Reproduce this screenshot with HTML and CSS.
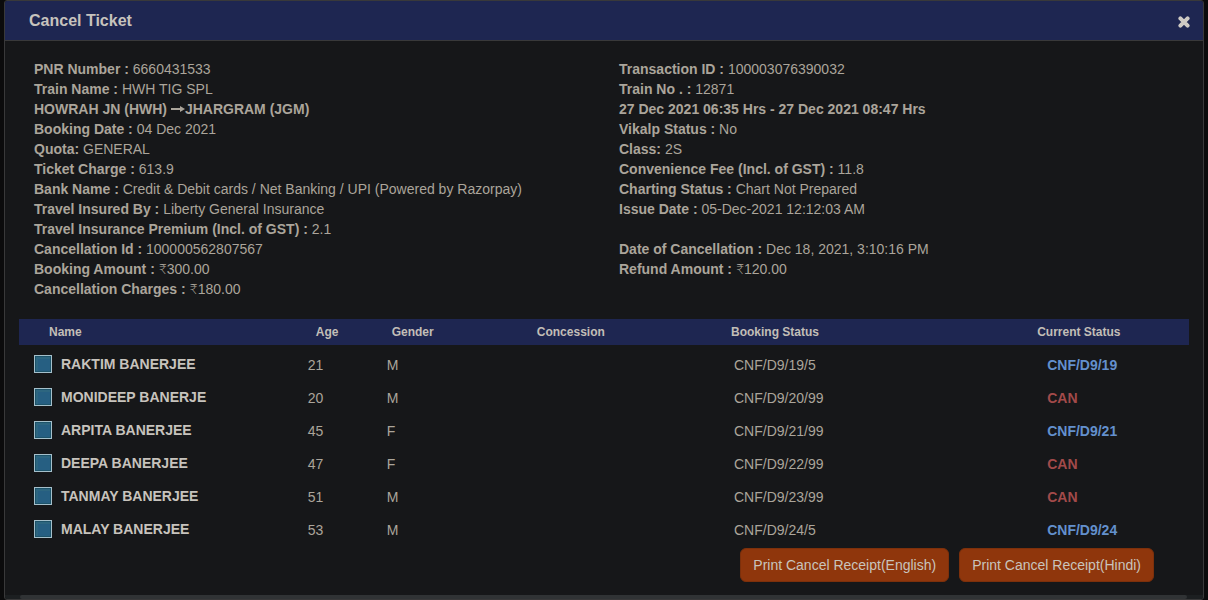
FILE: index.html
```html
<!DOCTYPE html>
<html lang="en">
<head>
<meta charset="utf-8">
<meta name="viewport" content="width=device-width, initial-scale=1">
<title>Cancel Ticket</title>
<link rel="stylesheet" href="styles.css">
</head>
<body>
<main class="dialog" role="dialog" aria-labelledby="dialog-title">
  <header class="dialog-header">
    <h1 class="dialog-title" id="dialog-title">Cancel Ticket</h1>
    <button class="close" type="button" aria-label="Close">
      <svg class="close-icon" viewBox="0 0 12 12" aria-hidden="true"><path d="M2.4 2.4 9.6 9.6M9.6 2.4 2.4 9.6"/></svg>
    </button>
  </header>
  <div class="dialog-body">
    <section class="details">
      <div class="detail-column">
        <p><b>PNR Number :</b> 6660431533</p>
        <p><b>Train Name :</b> HWH TIG SPL</p>
        <p><b>HOWRAH JN (HWH) <svg class="arrow" viewBox="0 0 14 10" role="img" aria-label="to"><path class="arrow-shaft" d="M0 5h11"/><path class="arrow-head" d="M9 2l5 3-5 3z"/></svg>JHARGRAM (JGM)</b></p>
        <p><b>Booking Date :</b> 04 Dec 2021</p>
        <p><b>Quota:</b> GENERAL</p>
        <p><b>Ticket Charge :</b> 613.9</p>
        <p><b>Bank Name :</b> Credit &amp; Debit cards / Net Banking / UPI (Powered by Razorpay)</p>
        <p><b>Travel Insured By :</b> Liberty General Insurance</p>
        <p><b>Travel Insurance Premium (Incl. of GST) :</b> 2.1</p>
        <p><b>Cancellation Id :</b> 100000562807567</p>
        <p><b>Booking Amount :</b> <span class="rupee">₹</span>300.00</p>
        <p><b>Cancellation Charges :</b> <span class="rupee">₹</span>180.00</p>
      </div>
      <div class="detail-column">
        <p><b>Transaction ID :</b> 100003076390032</p>
        <p><b>Train No . :</b> 12871</p>
        <p><b>27 Dec 2021 06:35 Hrs - 27 Dec 2021 08:47 Hrs</b></p>
        <p><b>Vikalp Status :</b> No</p>
        <p><b>Class:</b> 2S</p>
        <p><b>Convenience Fee (Incl. of GST) :</b> 11.8</p>
        <p><b>Charting Status :</b> Chart Not Prepared</p>
        <p><b>Issue Date :</b> 05-Dec-2021 12:12:03 AM</p>
        <p></p>
        <p><b>Date of Cancellation :</b> Dec 18, 2021, 3:10:16 PM</p>
        <p><b>Refund Amount :</b> <span class="rupee">₹</span>120.00</p>
      </div>
    </section>
    <table class="passengers">
      <thead>
        <tr>
          <th class="name" scope="col">Name</th>
          <th class="age" scope="col">Age</th>
          <th class="gender" scope="col">Gender</th>
          <th class="concession" scope="col">Concession</th>
          <th class="booking" scope="col">Booking Status</th>
          <th class="current" scope="col">Current Status</th>
        </tr>
      </thead>
      <tbody>
        <tr><td class="name"><label class="passenger"><input class="check" type="checkbox" checked>RAKTIM BANERJEE</label></td><td class="age">21</td><td class="gender">M</td><td class="concession"></td><td class="booking">CNF/D9/19/5</td><td class="current confirmed">CNF/D9/19</td></tr>
        <tr><td class="name"><label class="passenger"><input class="check" type="checkbox" checked>MONIDEEP BANERJE</label></td><td class="age">20</td><td class="gender">M</td><td class="concession"></td><td class="booking">CNF/D9/20/99</td><td class="current cancelled">CAN</td></tr>
        <tr><td class="name"><label class="passenger"><input class="check" type="checkbox" checked>ARPITA BANERJEE</label></td><td class="age">45</td><td class="gender">F</td><td class="concession"></td><td class="booking">CNF/D9/21/99</td><td class="current confirmed">CNF/D9/21</td></tr>
        <tr><td class="name"><label class="passenger"><input class="check" type="checkbox" checked>DEEPA BANERJEE</label></td><td class="age">47</td><td class="gender">F</td><td class="concession"></td><td class="booking">CNF/D9/22/99</td><td class="current cancelled">CAN</td></tr>
        <tr><td class="name"><label class="passenger"><input class="check" type="checkbox" checked>TANMAY BANERJEE</label></td><td class="age">51</td><td class="gender">M</td><td class="concession"></td><td class="booking">CNF/D9/23/99</td><td class="current cancelled">CAN</td></tr>
        <tr><td class="name"><label class="passenger"><input class="check" type="checkbox" checked>MALAY BANERJEE</label></td><td class="age">53</td><td class="gender">M</td><td class="concession"></td><td class="booking">CNF/D9/24/5</td><td class="current confirmed">CNF/D9/24</td></tr>
      </tbody>
    </table>
    <div class="actions">
      <button class="print" type="button">Print Cancel Receipt(English)</button>
      <button class="print" type="button">Print Cancel Receipt(Hindi)</button>
    </div>
  </div>
  <div class="scroll-track"><div class="scroll-thumb"></div></div>
</main>
</body>
</html>
```
FILE: styles.css
```css
* {
  box-sizing: border-box;
}

body {
  margin: 0;
  padding: 0 4px;
  background: #0b0b0c;
  color: #aba59b;
  font: 14px/20px "Liberation Sans", Arial, sans-serif;
}

p {
  margin: 0;
  min-height: 20px;
}

.dialog {
  display: flex;
  flex-direction: column;
  min-height: 100vh;
  background: #161719;
  border: 1px solid #39393a;
  border-radius: 3px;
  overflow: hidden;
}

.dialog-header {
  display: flex;
  align-items: center;
  justify-content: space-between;
  height: 40px;
  padding: 0 13px 0 24px;
  background: #1e2651;
  border-bottom: 1px solid #39393a;
}

.dialog-title {
  margin: 0;
  color: #c7c3bd;
  font-size: 16px;
  line-height: 20px;
}

.close {
  display: flex;
  padding: 2px 0 0;
  border: 0;
  background: none;
}

.close-icon {
  width: 12px;
  height: 12px;
  fill: none;
  stroke: #cecac4;
  stroke-width: 4;
  stroke-linecap: round;
}

.dialog-body {
  flex: 1;
  padding: 18px 14px 12px;
}

.details {
  display: grid;
  grid-template-columns: 1fr 1fr;
  margin-bottom: 20px;
}

.detail-column {
  padding: 0 15px;
}

.arrow {
  width: 14px;
  height: 10px;
}

.arrow-shaft {
  stroke: currentColor;
  stroke-width: 2;
}

.arrow-head {
  fill: currentColor;
}

.rupee {
  font-family: Lato, sans-serif;
  font-weight: 300;
  line-height: 1;
}

.passengers {
  width: 100%;
  table-layout: fixed;
  border-collapse: collapse;
  text-align: left;
}

.passengers th,
.passengers td {
  padding: 0 0 0 8px;
}

.passengers th {
  height: 26px;
  background: #1e2651;
  color: #c2beb7;
  font-size: 12px;
  line-height: 14px;
}

.passengers td {
  height: 33px;
}

.passengers tbody::before {
  content: "";
  display: block;
  height: 3px;
}

.name { width: 24%; }
.age { width: 7%; }
.gender { width: 13%; }
.concession { width: 16%; }
.booking { width: 26%; }
.current { width: 14%; }

.passengers th.name { padding-left: 30px; }
.passengers td.name { padding: 0 0 2px 15px; }
.passengers th.age { padding-left: 16px; }
.passengers th.gender { padding-left: 10px; }
.passengers td.gender { padding-left: 5px; }
.passengers th.concession { padding-left: 3px; }
.passengers th.booking { padding-left: 10px; }
.passengers td.booking { padding-left: 13px; }
.passengers th.current { padding-left: 12px; }
.passengers td.current { padding-left: 22px; }

.passenger {
  display: flex;
  align-items: center;
  gap: 9px;
  color: #c7c3bd;
  font-weight: bold;
}

.check {
  appearance: none;
  width: 18px;
  height: 18px;
  margin: 0;
  border: 1px solid #a5c0cb;
  background: #265f82;
  box-shadow: inset 0 0 0 1px #1d5369, inset 3px 3px 0 #2d6680;
}

.confirmed {
  color: #6390cd;
  font-weight: bold;
}

.cancelled {
  color: #a24a4a;
  font-weight: bold;
}

.actions {
  display: flex;
  justify-content: flex-end;
  gap: 10px;
  padding: 2px 35px 0 0;
}

.print {
  padding: 6px 12px;
  border: 1px solid #7d300b;
  border-radius: 6px;
  background: #8f360c;
  color: #c9c4bc;
  font: inherit;
}

.scroll-track {
  padding: 0 16px 0 15px;
  background: #1c1f21;
}

.scroll-thumb {
  height: 4px;
  border-radius: 2px;
  background: #303335;
}
```
